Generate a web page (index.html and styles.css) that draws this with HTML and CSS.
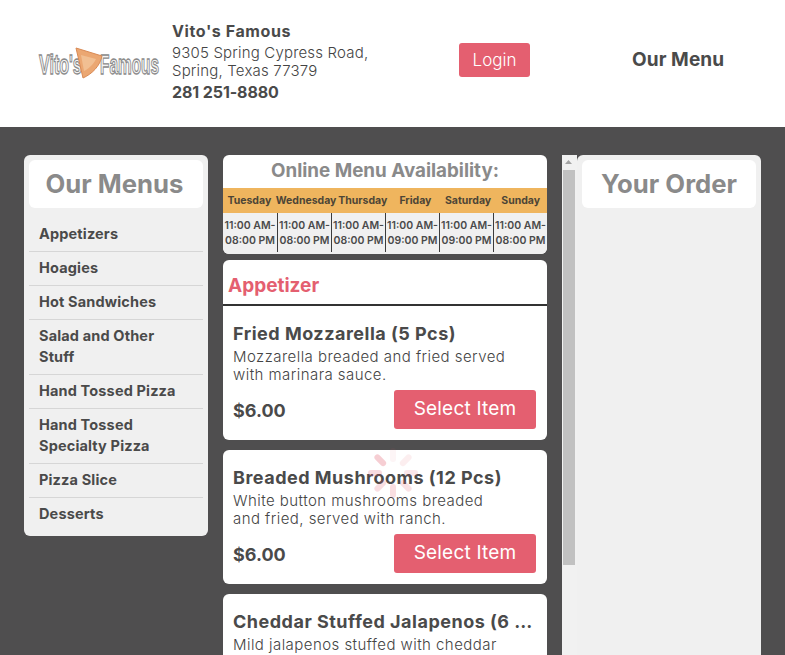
FILE: index.html
```html
<!DOCTYPE html>
<html lang="en">
<head>
<meta charset="utf-8">
<title>Vito's Famous</title>
<link rel="stylesheet" href="styles.css">
</head>
<body>
<header class="site-header">
  <div class="logo">
    <svg width="122" height="32" viewBox="0 0 122 32">
      <text class="logo-text" transform="translate(1 27) scale(.595 1)">Vito's</text>
      <text class="logo-text" transform="translate(62 27) scale(.57 1)">Famous</text>
      <path d="M38 1 L64 9 C62 19 54 27 45 31 Z" fill="#eba772" stroke="#d98a55" stroke-width="1"/>
      <path d="M43 8 L58 12 C55 18 50 22 46 24 Z" fill="#f1bf92"/>
    </svg>
  </div>
  <div class="address">
    <div class="addr-name">Vito's Famous</div>
    <div class="addr-line">9305 Spring Cypress Road,<br>Spring, Texas 77379</div>
    <div class="addr-phone">281 251-8880</div>
  </div>
  <div class="login-wrap"><a class="login">Login</a></div>
  <div class="header-menu">Our Menu</div>
</header>
<main class="content">
  <aside class="panel menus">
    <h2 class="panel-title menus-title">Our Menus</h2>
    <ul class="menu-list">
      <li>Appetizers</li>
      <li>Hoagies</li>
      <li>Hot Sandwiches</li>
      <li>Salad and Other Stuff</li>
      <li>Hand Tossed Pizza</li>
      <li>Hand Tossed Specialty Pizza</li>
      <li>Pizza Slice</li>
      <li>Desserts</li>
    </ul>
  </aside>
  <section class="scroller">
    <div class="center">
      <div class="avail">
        <h3 class="avail-title">Online Menu Availability:</h3>
        <div class="days">
          <span>Tuesday</span><span>Wednesday</span><span>Thursday</span><span>Friday</span><span>Saturday</span><span>Sunday</span>
        </div>
        <div class="hours">
          <span>11:00 AM-<br>08:00 PM</span><span>11:00 AM-<br>08:00 PM</span><span>11:00 AM-<br>08:00 PM</span><span>11:00 AM-<br>09:00 PM</span><span>11:00 AM-<br>09:00 PM</span><span>11:00 AM-<br>08:00 PM</span>
        </div>
      </div>
      <div class="category"><h3>Appetizer</h3></div>
      <article class="item first">
        <h4>Fried Mozzarella (5 Pcs)</h4>
        <p>Mozzarella breaded and fried served with marinara sauce.</p>
        <div class="item-foot"><strong>$6.00</strong><a class="select">Select Item</a></div>
      </article>
      <article class="item">
        <h4>Breaded Mushrooms (12 Pcs)</h4>
        <p>White button mushrooms breaded and fried, served with ranch.</p>
        <div class="item-foot"><strong>$6.00</strong><a class="select">Select Item</a></div>
      </article>
      <article class="item">
        <h4>Cheddar Stuffed Jalapenos (6 Pcs)</h4>
        <p>Mild jalapenos stuffed with cheddar cheese, breaded and fried.</p>
        <div class="item-foot"><strong>$6.00</strong><a class="select">Select Item</a></div>
      </article>
    </div>
    <div class="scrollbar">
      <svg class="arrow" width="15" height="15" viewBox="0 0 15 15"><path d="M3 9 L6.5 5 L10 9 Z" fill="#a3a3a3"/></svg>
      <div class="thumb"></div>
    </div>
  </section>
  <aside class="panel order">
    <h2 class="panel-title">Your Order</h2>
  </aside>
  <svg class="spinner" width="52" height="52" viewBox="-26 -26 52 52">
    <g stroke="#e45f70" stroke-width="6" stroke-linecap="round">
      <line x1="0" y1="-22" x2="0" y2="-14" opacity=".06"/>
      <line x1="0" y1="-22" x2="0" y2="-14" opacity=".1" transform="rotate(45)"/>
      <line x1="0" y1="-22" x2="0" y2="-14" opacity=".14" transform="rotate(90)"/>
      <line x1="0" y1="-22" x2="0" y2="-14" opacity=".18" transform="rotate(135)"/>
      <line x1="0" y1="-22" x2="0" y2="-14" opacity=".2" transform="rotate(180)"/>
      <line x1="0" y1="-22" x2="0" y2="-14" opacity=".2" transform="rotate(225)"/>
      <line x1="0" y1="-22" x2="0" y2="-14" opacity=".22" transform="rotate(270)"/>
      <line x1="0" y1="-22" x2="0" y2="-14" opacity=".3" transform="rotate(315)"/>
    </g>
  </svg>
</main>
</body>
</html>
```
FILE: styles.css
```css
* { box-sizing: border-box; }
html, body { margin: 0; height: 100%; overflow: hidden; }
body { font-family: Inter, "Liberation Sans", sans-serif; color: #4a4a4a; background: #4f4e4f; }
h2, h3, h4, p, ul { margin: 0; padding: 0; }

.site-header { height: 127px; background: #fff; display: flex; align-items: center; padding-left: 38px; }
.logo { width: 134px; flex: none; display: flex; margin-top: -1px; }
.logo-text { font-family: "Liberation Sans", sans-serif; font-weight: 700; font-size: 27px; fill: #f4f4f4; stroke: #8a8a8a; stroke-width: 1.3px; }
.address { width: 287px; flex: none; font-size: 15px; line-height: 18px; margin-top: -4px; }
.addr-name { font-weight: 700; font-size: 16px; line-height: 25px; letter-spacing: .6px; }
.addr-line { font-weight: 300; color: #444; letter-spacing: .18px; }
.addr-phone { font-weight: 700; font-size: 16px; line-height: 25px; letter-spacing: -.1px; }
.login-wrap { width: 173px; flex: none; }
.login { display: block; background: #e45f70; color: #fff; font-size: 17px; font-weight: 300; height: 34px; line-height: 34px; border-radius: 3px; width: 71px; text-align: center; margin-top: -8px; }
.header-menu { font-weight: 700; font-size: 19px; letter-spacing: .1px; margin-top: -9px; }

.content { position: relative; display: flex; align-items: flex-start; padding: 28px 0 0 24px; height: 528px; overflow: hidden; }
.panel { width: 184px; flex: none; background: #f0f0f0; border-radius: 6px; padding: 5px; }
.panel-title { height: 48px; background: #fff; border-radius: 6px; text-align: center; font-size: 25.7px; line-height: 47px; font-weight: 700; color: #8a8a8a; }
.menus-title { padding-right: 3px; }
.menu-list { list-style: none; padding-top: 10px; }
.menu-list li { padding: 5px 14px 7px 10px; font-size: 14.5px; line-height: 21px; letter-spacing: .15px; font-weight: 700; color: #4a4a4a; border-bottom: 1px solid #d6d6d6; }
.menu-list li:last-child { border-bottom: 0; }

.scroller { margin-left: 15px; width: 354px; flex: none; display: flex; height: 500px; }
.center { width: 324px; flex: none; margin-right: 15px; }
.avail { background: #fff; border-radius: 6px; overflow: hidden; }
.avail-title { height: 33px; text-align: center; font-size: 18.8px; line-height: 31px; color: #8a8a8a; font-weight: 700; }
.days, .hours { display: grid; grid-template-columns: repeat(6, 1fr); text-align: center; }
.days { height: 25px; background: #efb55e; font-size: 10.5px; line-height: 25px; font-weight: 700; color: #4d4536; }
.days span { white-space: nowrap; }
.hours { height: 41px; background: #f0f0f0; padding-bottom: 2px; font-size: 10.5px; line-height: 15px; font-weight: 600; color: #4a4a4a; }
.hours span { padding-top: 5px; border-left: 1px solid #3c3c3c; white-space: nowrap; }
.hours span:first-child { border-left: 0; }

.category { margin-top: 6px; height: 46px; background: #fff; border-radius: 6px 6px 0 0; border-bottom: 2px solid #333; padding: 14px 5px 0; }
.category h3 { font-size: 19px; line-height: 24px; color: #e45f70; font-weight: 700; }

.item { background: #fff; border-radius: 6px; margin-top: 10px; padding: 16px 11px 11px 10px; height: 134px; }
.item.first { border-radius: 0 0 6px 6px; margin-top: 0; }
.item h4 { font-size: 18px; line-height: 24px; letter-spacing: .5px; font-weight: 700; white-space: nowrap; overflow: hidden; text-overflow: ellipsis; color: #4a4a4a; }
.item p { font-size: 15px; font-weight: 300; line-height: 18px; margin-top: 2px; width: 276px; color: #444; letter-spacing: .45px; }
.item-foot { display: flex; justify-content: space-between; align-items: center; margin-top: 6px; }
.item-foot strong { font-size: 18px; margin-top: 2px; }
.select { display: block; width: 142px; height: 39px; line-height: 38px; background: #e45f70; color: #fff; text-align: center; font-size: 19px; font-weight: 400; letter-spacing: .2px; border-radius: 3px; }

.scrollbar { width: 15px; flex: none; background: #f1f1f1; height: 500px; }
.arrow { display: block; }
.thumb { height: 395px; background: #c1c1c1; margin: 0 2px 0 1px; }

.order { margin-left: 0; height: 520px; }
.spinner { position: absolute; left: 366.5px; top: 320px; }
```
